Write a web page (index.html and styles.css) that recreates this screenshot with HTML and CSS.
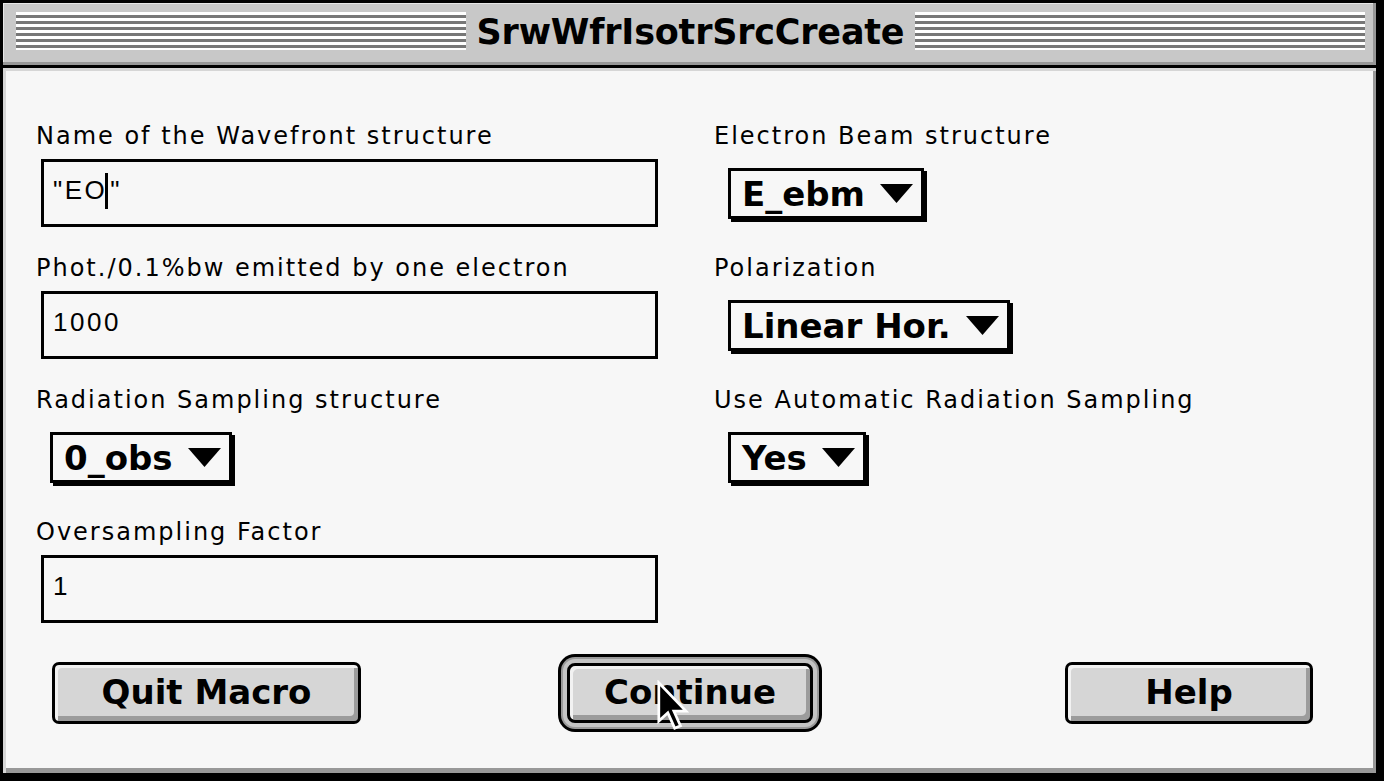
FILE: index.html
```html
<!DOCTYPE html>
<html>
<head>
<meta charset="utf-8">
<link rel="stylesheet" href="styles.css">
</head>
<body>
<div class="window">
  <div class="titlebar">
    <div class="stripes"></div>
    <div class="title">SrwWfrIsotrSrcCreate</div>
    <div class="stripes"></div>
  </div>
  <div class="content">
    <div class="grid">
      <div class="cell">
        <div class="label">Name of the Wavefront structure</div>
        <div class="field"><span>"EO</span><span class="caret"></span><span>"</span></div>
      </div>
      <div class="cell">
        <div class="label">Electron Beam structure</div>
        <div class="popup"><span>E_ebm</span><svg class="tri" viewBox="0 0 33 19"><polygon points="0,0 33,0 16.5,19"/></svg></div>
      </div>
      <div class="cell">
        <div class="label">Phot./0.1%bw emitted by one electron</div>
        <div class="field">1000</div>
      </div>
      <div class="cell">
        <div class="label">Polarization</div>
        <div class="popup"><span>Linear Hor.</span><svg class="tri" viewBox="0 0 33 19"><polygon points="0,0 33,0 16.5,19"/></svg></div>
      </div>
      <div class="cell">
        <div class="label">Radiation Sampling structure</div>
        <div class="popup"><span>0_obs</span><svg class="tri" viewBox="0 0 33 19"><polygon points="0,0 33,0 16.5,19"/></svg></div>
      </div>
      <div class="cell">
        <div class="label">Use Automatic Radiation Sampling</div>
        <div class="popup"><span>Yes</span><svg class="tri" viewBox="0 0 33 19"><polygon points="0,0 33,0 16.5,19"/></svg></div>
      </div>
      <div class="cell">
        <div class="label">Oversampling Factor</div>
        <div class="field">1</div>
      </div>
      <div class="cell"></div>
    </div>
    <div class="buttons">
      <div class="btn btn-quit">Quit Macro</div>
      <div class="btn btn-continue">Continue</div>
      <div class="btn btn-help">Help</div>
    </div>
  </div>
  <svg class="cursor" viewBox="0 0 12 19"><path d="M1 1 L1 15 L4.3 12 L6.8 17.6 L8.9 16.7 L6.5 11.4 L11 11.4 Z" fill="#000" stroke="#fff" stroke-width="1" stroke-linejoin="miter"/></svg>
</div>
</body>
</html>
```
FILE: styles.css
```css
html, body {
  margin: 0;
  padding: 0;
  background: #000;
}
.window {
  position: relative;
  width: 1384px;
  height: 781px;
  box-sizing: border-box;
  border-style: solid;
  border-color: #000;
  border-width: 3px 8px 8px 3px;
  display: flex;
  flex-direction: column;
  background: #f7f7f7;
  overflow: hidden;
}
.titlebar {
  height: 65px;
  box-sizing: border-box;
  flex: none;
  background: #c8c8c8;
  border-bottom: 3px solid #000;
  box-shadow: inset 0 -3px 0 #989898, inset -3px 0 0 #989898, inset 1px 1px 0 #e6e6e6;
  display: flex;
  align-items: flex-start;
  padding: 9px 11px 0 13px;
}
.stripes {
  flex: 1;
  height: 38px;
  background: repeating-linear-gradient(to bottom, #ffffff 0 3px, #777777 3px 6px);
}
.title {
  flex: none;
  padding: 0 11px;
  height: 38px;
  line-height: 40px;
  font-family: "DejaVu Sans", sans-serif;
  font-weight: bold;
  font-size: 35px;
  color: #000;
  letter-spacing: -0.2px;
}
.content {
  flex: 1;
  box-shadow: inset 3px 3px 0 #d6d6d6, inset -3px -5px 0 #999;
  padding: 53px 0 0 33px;
}
.grid {
  display: grid;
  grid-template-columns: 678px 1fr;
  grid-template-rows: repeat(4, 132px);
}
.cell {
  display: flex;
  flex-direction: column;
  align-items: flex-start;
}
.label {
  font-family: "DejaVu Sans", sans-serif;
  font-size: 24px;
  letter-spacing: 2px;
  line-height: 30px;
  height: 30px;
  color: #000;
  white-space: nowrap;
}
.field {
  margin-top: 8px;
  margin-left: 5px;
  width: 617px;
  height: 68px;
  box-sizing: border-box;
  border: 3px solid #000;
  padding: 0 0 6px 9px;
  display: flex;
  align-items: center;
  font-family: "Liberation Sans", sans-serif;
  font-size: 26px;
  letter-spacing: 2.5px;
  color: #000;
  white-space: nowrap;
}
.caret {
  display: inline-block;
  flex: none;
  width: 3px;
  height: 36px;
  background: #000;
  margin: 0 2px 0 -2px;
  position: relative;
  top: 1px;
}
.popup {
  margin-top: 17px;
  margin-left: 14px;
  height: 51px;
  box-sizing: border-box;
  border: 3px solid #000;
  box-shadow: 3px 3px 0 #000;
  background: #f7f7f7;
  display: inline-flex;
  align-items: center;
  gap: 15px;
  padding: 0 8px 0 11px;
  font-family: "DejaVu Sans", sans-serif;
  font-weight: bold;
  font-size: 34px;
  color: #000;
}
.tri {
  width: 33px;
  height: 19px;
  fill: #000;
}
.buttons {
  display: flex;
  align-items: center;
  margin-top: 13px;
  padding-left: 16px;
}
.btn {
  height: 62px;
  box-sizing: border-box;
  border: 3px solid #000;
  border-radius: 7px;
  background: #d6d6d6;
  box-shadow: inset 3px 3px 0 #f2f2f2, inset -4px -5px 0 #9c9c9c;
  display: flex;
  align-items: center;
  justify-content: center;
  padding-bottom: 3px;
  font-family: "DejaVu Sans", sans-serif;
  font-weight: bold;
  font-size: 34px;
  color: #000;
}
.btn-quit {
  width: 309px;
}
.btn-continue {
  width: 246px;
  height: 60px;
  margin-left: 206px;
  box-shadow: inset 3px 3px 0 #f2f2f2, inset -4px -5px 0 #9c9c9c, 0 0 0 4px #c4c4c4, 0 0 0 6px #9a9a9a, 0 0 0 9px #000;
  border-radius: 8px;
}
.btn-help {
  width: 248px;
  margin-left: 252px;
}
.cursor {
  position: absolute;
  left: 653px;
  top: 677px;
  width: 33px;
  height: 52px;
}
```
